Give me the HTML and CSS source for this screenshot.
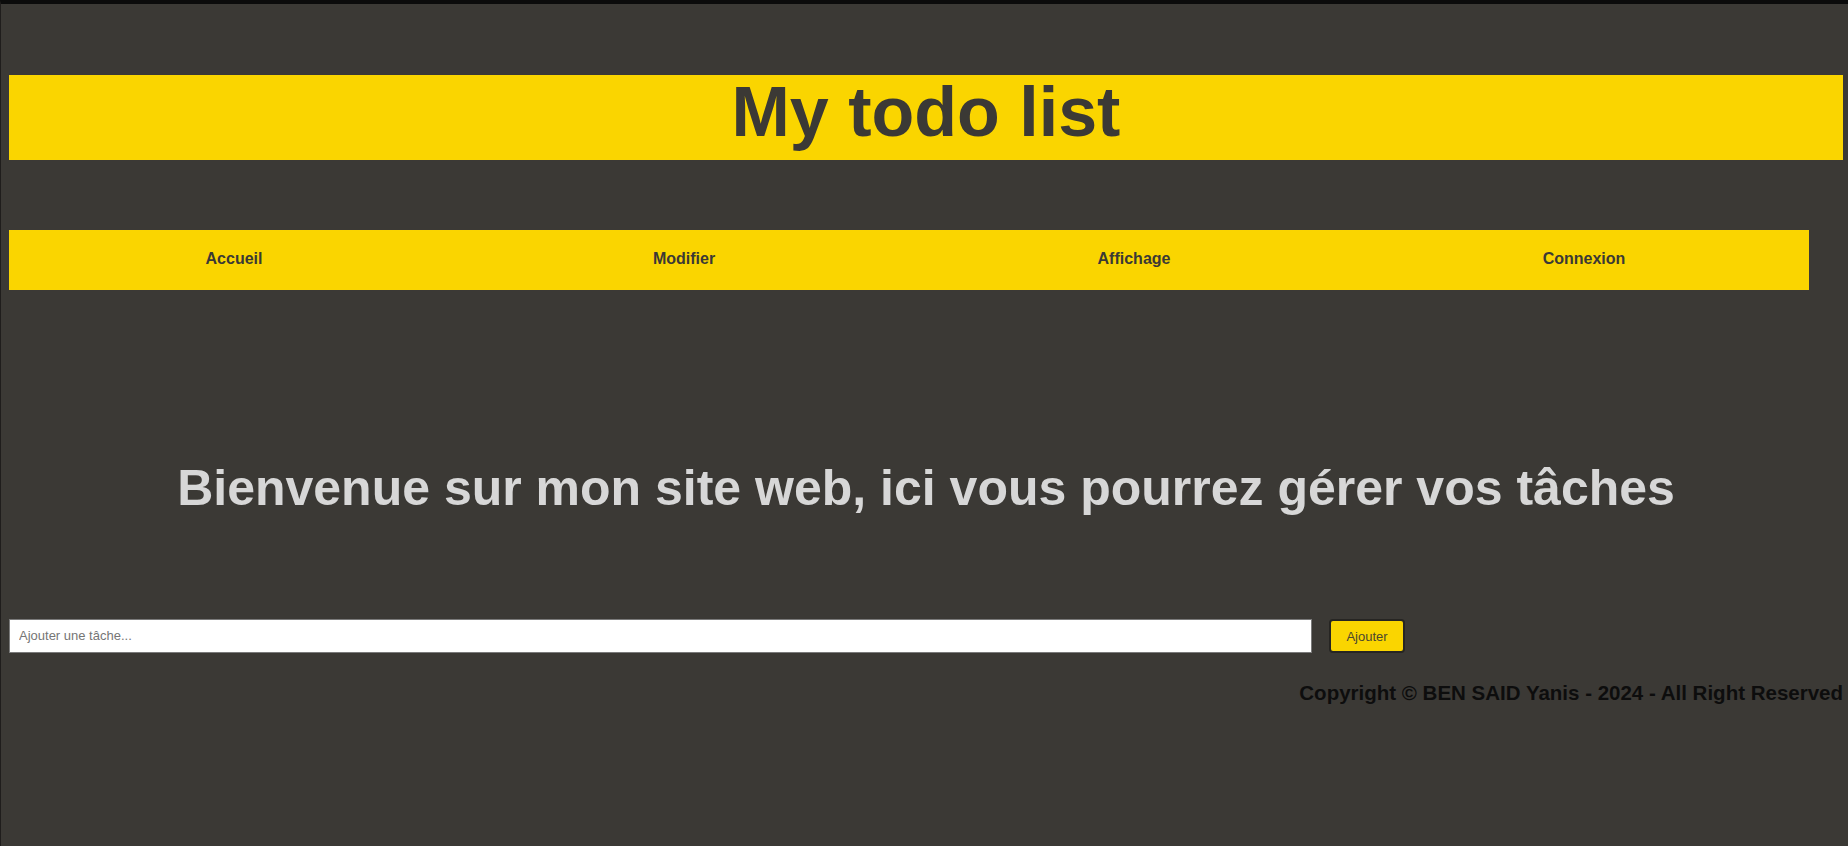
FILE: index.html
```html
<!DOCTYPE html>
<html lang="fr">
<head>
<meta charset="utf-8">
<title>My todo list</title>
<link rel="stylesheet" href="styles.css">
</head>
<body>
<div class="page">
  <header class="site-header">
    <h1 class="site-title">My todo list</h1>
  </header>
  <nav class="site-nav">
    <a class="nav-link" href="#">Accueil</a>
    <a class="nav-link" href="#">Modifier</a>
    <a class="nav-link" href="#">Affichage</a>
    <a class="nav-link" href="#">Connexion</a>
  </nav>
  <main class="content">
    <h2 class="welcome">Bienvenue sur mon site web, ici vous pourrez gérer vos tâches</h2>
    <form class="task-form">
      <input class="task-input" type="text" placeholder="Ajouter une tâche...">
      <button class="task-button" type="button">Ajouter</button>
    </form>
  </main>
  <footer class="site-footer">Copyright © BEN SAID Yanis - 2024 - All Right Reserved</footer>
</div>
</body>
</html>
```

FILE: styles.css
```css
html {
  margin: 0;
  height: 100%;
  background: #3b3935;
  border-top: 4px solid #0b0b0b;
  border-left: 1px solid #1f1d1c;
  box-sizing: border-box;
}

body {
  margin: 0;
  font-family: "Liberation Sans", Arial, sans-serif;
  color: #3b3935;
}

.page {
  padding: 71px 5px 0 8px;
}

.site-header {
  background: #fad500;
  height: 85px;
  box-sizing: border-box;
  padding-top: 2px;
  text-align: center;
}

.site-title {
  margin: 0;
  font-size: 70px;
  line-height: 70px;
  font-weight: bold;
  color: #3b3935;
}

.site-nav {
  margin-top: 70px;
  width: 1800px;
  height: 60px;
  background: #fad500;
  display: grid;
  grid-template-columns: repeat(4, 1fr);
}

.nav-link {
  text-align: center;
  font-size: 16px;
  font-weight: bold;
  line-height: 57px;
  color: #3b3935;
  text-decoration: none;
}

.content {
  padding-top: 170px;
}

.welcome {
  margin: 0;
  text-align: center;
  font-size: 50px;
  line-height: 57px;
  font-weight: bold;
  color: #d7d7d7;
}

.task-form {
  margin-top: 101px;
  display: flex;
  align-items: center;
  gap: 17px;
}

.task-input {
  width: 1303px;
  height: 34px;
  box-sizing: border-box;
  border: 1px solid #7a7a7a;
  background: #ffffff;
  padding: 0 9px;
  font-family: "Liberation Sans", Arial, sans-serif;
  font-size: 13px;
  color: #333;
  margin: 0;
}

.task-input::placeholder {
  color: #757575;
}

.task-button {
  width: 76px;
  height: 34px;
  box-sizing: border-box;
  background: #fad500;
  border: 2px solid #262523;
  border-radius: 4px;
  font-family: "Liberation Sans", Arial, sans-serif;
  font-size: 13px;
  color: #4a4630;
  padding: 0;
  margin-top: 1px;
}

.site-footer {
  margin-top: 28px;
  text-align: right;
  font-size: 20.5px;
  line-height: 23px;
  font-weight: bold;
  color: #0d0d0d;
}
```
